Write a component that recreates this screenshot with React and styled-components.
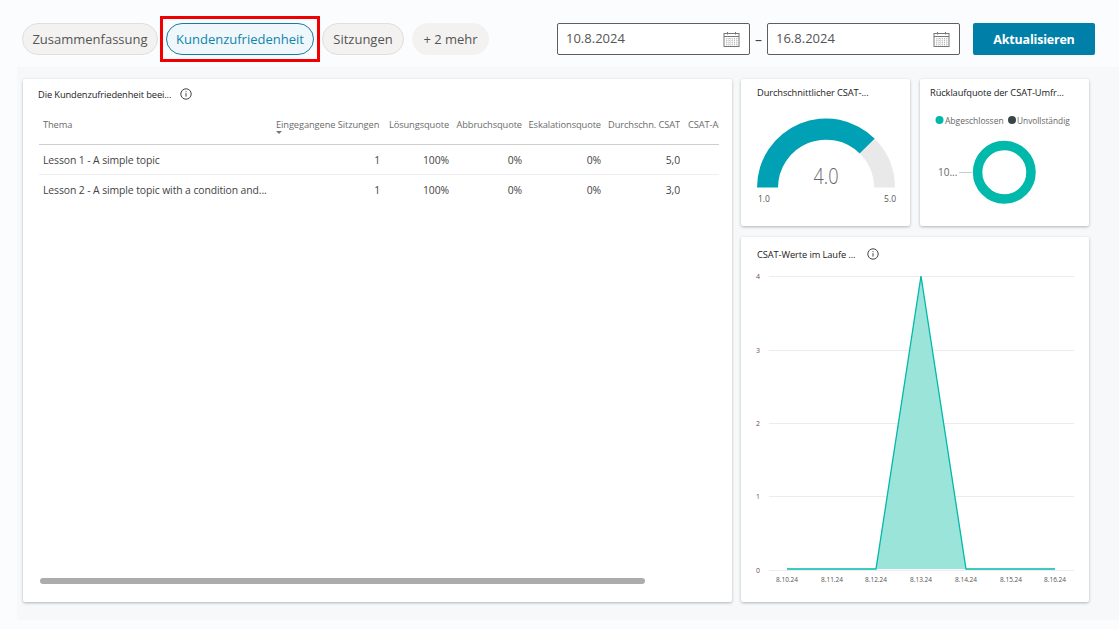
import styled, {createGlobalStyle} from "styled-components";

const GlobalStyle = createGlobalStyle`
	html, body {
		margin: 0;
		padding: 0;
		width: 1119px;
		height: 629px;
		overflow: hidden;
		background: #f8fbfe;
		font-family: "Open Sans", "Liberation Sans", sans-serif;
	}
`

const Page = styled.div`
	width: 1119px;
	height: 629px;
	display: flex;
	flex-direction: column;
	background: #fbfcfe;
`

const TopBar = styled.div`
	height: 67px;
	box-sizing: border-box;
	padding: 23px 24px 0 22px;
	display: flex;
	justify-content: space-between;
	align-items: flex-start;
`

const Pills = styled.div`
	display: flex;
	gap: 8px;
`

const Pill = styled.div`
	position: relative;
	height: 32px;
	box-sizing: border-box;
	width: ${p => p.$width}px;
	padding-bottom: 1px;
	display: flex;
	align-items: center;
	justify-content: center;
	border-radius: 16px;
	font-size: 13px;
	white-space: nowrap;
	color: ${p => p.$active ? "#0f84ad" : "#555"};
	background: ${p => p.$active ? "#eff7fb" : "#f3f2f1"};
	border: 1px solid ${p => p.$active ? "#0f7fa8" : p.$plain ? "#f3f2f1" : "#e1dfdd"};

	${p => p.$active && `
		&::after {
			content: "";
			position: absolute;
			inset: -8px -7px;
			border: 3px solid #f00000;
		}
	`}
`

const DateRow = styled.div`
	display: flex;
	align-items: center;
`

const DateField = styled.div`
	width: 193px;
	height: 32px;
	box-sizing: border-box;
	border: 1px solid #605e5c;
	border-radius: 2px;
	background: #fff;
	padding: 0 9px 2px 8px;
	display: flex;
	align-items: center;
	justify-content: space-between;
	font-size: 13px;
	color: #555;

	svg {
		margin-top: 2px;
	}
`

const Dash = styled.span`
	width: 17px;
	text-align: center;
	font-size: 14px;
	color: #444;
`

const UpdateButton = styled.button`
	width: 122px;
	height: 32px;
	margin-left: 13px;
	border: 0;
	border-radius: 2px;
	background: #0080a9;
	color: #fff;
	font-family: inherit;
	font-size: 12.5px;
	font-weight: 700;
	letter-spacing: -0.2px;
`

const Content = styled.div`
	flex: 1;
	margin: 0 0 9px 17px;
	padding: 12px 30px 18px 6px;
	background: #f7f8f9;
	display: grid;
	grid-template-columns: 709px 169px 170px;
	grid-template-rows: 147px 365px;
	column-gap: 9px;
	row-gap: 11px;
	box-sizing: border-box;
`

const Card = styled.div`
	background: #fff;
	border-radius: 2px;
	box-shadow: 0 1px 3px rgba(0, 0, 0, 0.28);
	box-sizing: border-box;
	position: relative;
	overflow: hidden;
`

const TableCard = styled(Card)`
	grid-row: 1 / span 2;
	padding: 7px 13px 0 15px;
`

const DonutCard = styled(Card)`
	margin-left: 1px;
`

const WideCard = styled(Card)`
	grid-column: 2 / span 2;
`

const CardTitle = styled.div`
	display: flex;
	align-items: center;
	gap: ${p => p.$gap || 0}px;
	height: 16px;
	font-size: 9.3px;
	color: #222;
	white-space: nowrap;
	letter-spacing: -0.1px;
`

const ChartTitle = styled(CardTitle)`
	padding: ${p => p.$top}px 0 0 ${p => p.$left}px;
`

const Table = styled.div`
	margin-top: 8px;
	margin-left: 1px;
	width: 680px;
	overflow: hidden;
`

const TableRow = styled.div`
	display: grid;
	grid-template-columns: 233px 104px 69px 73px 79px 79px 43px;
	height: ${p => p.$head ? 35 : 30}px;
	box-sizing: border-box;
	padding-left: 4px;
	border-bottom: 1px solid ${p => p.$head ? "#cfcfcf" : "#eeeeee"};
	align-items: ${p => p.$head ? "start" : "center"};
	font-size: ${p => p.$head ? 9.3 : 10.4}px;
	color: ${p => p.$head ? "#6b6b6b" : "#444"};
	white-space: nowrap;
	letter-spacing: -0.1px;

	&:last-child {
		border-bottom: 0;
	}
`

const Cell = styled.div`
	text-align: ${p => p.$left ? "left" : "right"};
	overflow: hidden;
	position: relative;
	line-height: 14px;
`

const HeadCell = styled(Cell)`
	padding: 8px 0 0 ${p => p.$indent || 0}px;
	height: 26px;
`

const SortMark = styled.span`
	position: absolute;
	left: 0;
	top: 21px;
	border-left: 3px solid transparent;
	border-right: 3px solid transparent;
	border-top: 3px solid #777;
`

const ScrollBar = styled.div`
	position: absolute;
	left: 17px;
	bottom: 18px;
	width: 605px;
	height: 6px;
	border-radius: 3px;
	background: #acacac;
`

const ChartSvg = styled.svg`
	display: block;
	font-family: "Open Sans", "Liberation Sans", sans-serif;
`

const TrendSvg = styled(ChartSvg)`
	margin-top: 7px;
`

const InfoIcon = () => (
	<svg width="12" height="12" viewBox="0 0 12 12" fill="none" stroke="#444" strokeWidth="1">
		<circle cx="6" cy="6" r="5.2"/>
		<path d="M6 5.2v3.4M6 3.2v1"/>
	</svg>
)

const CalendarIcon = () => (
	<svg width="17" height="17" viewBox="0 0 17 17" fill="none" stroke="#777" strokeWidth="1">
		<rect x="1" y="2.5" width="15" height="13"/>
		<path d="M1 5.5h15M4.5 1v2.5M12.5 1v2.5"/>
		<path d="M3 8h11M3 10h11M3 12h11M3 14h11M4 7v8M6.5 7v8M9 7v8M11.5 7v8M14 7v8" stroke="#aaa" strokeWidth="0.7" strokeDasharray="1 1"/>
	</svg>
)

const rows = [
	{topic: "Lesson 1 - A simple topic", csat: "5,0"},
	{topic: "Lesson 2 - A simple topic with a condition and...", csat: "3,0"},
]

const gridY = [
	{y: 7, label: "4"},
	{y: 81, label: "3"},
	{y: 154, label: "2"},
	{y: 227, label: "1"},
	{y: 301, label: "0"},
]

const days = [
	{x: 46, label: "8.10.24"},
	{x: 91, label: "8.11.24"},
	{x: 135, label: "8.12.24"},
	{x: 180, label: "8.13.24"},
	{x: 225, label: "8.14.24"},
	{x: 270, label: "8.15.24"},
	{x: 314, label: "8.16.24"},
]

const Gauge = () => (
	<ChartSvg width="169" height="110" viewBox="0 0 169 110">
		<path d="M16 87.500A69 69 0 0 1 133.800 38.700L118.800 53.600A48 48 0 0 0 37 87.500Z" fill="#00a0b5"/>
		<path d="M133.800 38.700A69 69 0 0 1 154 87.500H133A48 48 0 0 0 118.800 53.600Z" fill="#e9e9e9"/>
		<text x="85" y="84" textAnchor="middle" fontSize="22" fontWeight="300" textLength="25" lengthAdjust="spacingAndGlyphs" fill="#666">4.0</text>
		<text x="17" y="102" fontSize="8.500" fill="#555">1.0</text>
		<text x="155" y="102" textAnchor="end" fontSize="8.500" fill="#555">5.0</text>
	</ChartSvg>
)

const Donut = () => (
	<ChartSvg width="169" height="110" viewBox="0 0 169 110">
		<circle cx="19.500" cy="20" r="4" fill="#00b9aa"/>
		<text x="25" y="23.500" fontSize="8.500" fill="#666">Abgeschlossen</text>
		<circle cx="92" cy="20" r="4" fill="#374649"/>
		<text x="97" y="23.500" fontSize="8.300" fill="#666">Unvollständig</text>
		<text x="18" y="76" fontSize="10" fill="#666">10...</text>
		<path d="M39 72.500H52" stroke="#ccc" strokeWidth="1"/>
		<circle cx="84.300" cy="72.300" r="26.700" fill="none" stroke="#00b9aa" strokeWidth="9.500"/>
	</ChartSvg>
)

const TrendChart = () => (
	<TrendSvg width="348" height="330" viewBox="0 0 348 330">
		{gridY.map(g => (
			<g key={g.label}>
				<path d={`M28 ${g.y + 0.5}H333`} stroke="#ececec" strokeWidth="1"/>
				<text x="19" y={g.y + 3} textAnchor="end" fontSize="7" fill="#7a4b4b">{g.label}</text>
			</g>
		))}
		<path d="M135 300L180 7L225 300Z" fill="#9ae4da"/>
		<path d="M46 300H135L180 7L225 300H314" fill="none" stroke="#00b9aa" strokeWidth="1.300"/>
		{days.map(d => (
			<text key={d.label} x={d.x} y="313" textAnchor="middle" fontSize="6.500" fill="#555">{d.label}</text>
		))}
	</TrendSvg>
)

const App = () => {
	return (
		<Page>
			<GlobalStyle/>
			<TopBar>
				<Pills>
					<Pill $width={136}>Zusammenfassung</Pill>
					<Pill $width={148} $active>Kundenzufriedenheit</Pill>
					<Pill $width={82}>Sitzungen</Pill>
					<Pill $width={77} $plain>+ 2 mehr</Pill>
				</Pills>
				<DateRow>
					<DateField>10.8.2024<CalendarIcon/></DateField>
					<Dash>–</Dash>
					<DateField>16.8.2024<CalendarIcon/></DateField>
					<UpdateButton>Aktualisieren</UpdateButton>
				</DateRow>
			</TopBar>
			<Content>
				<TableCard>
					<CardTitle $gap={9}>Die Kundenzufriedenheit beei...<InfoIcon/></CardTitle>
					<Table>
						<TableRow $head>
							<HeadCell $left>Thema</HeadCell>
							<HeadCell $left>Eingegangene Sitzungen<SortMark/></HeadCell>
							<HeadCell>Lösungsquote</HeadCell>
							<HeadCell>Abbruchsquote</HeadCell>
							<HeadCell>Eskalationsquote</HeadCell>
							<HeadCell>Durchschn. CSAT</HeadCell>
							<HeadCell $left $indent={8}>CSAT-Antworten</HeadCell>
						</TableRow>
						{rows.map(r => (
							<TableRow key={r.topic}>
								<Cell $left>{r.topic}</Cell>
								<Cell>1</Cell>
								<Cell>100%</Cell>
								<Cell>0%</Cell>
								<Cell>0%</Cell>
								<Cell>{r.csat}</Cell>
								<Cell/>
							</TableRow>
						))}
					</Table>
					<ScrollBar/>
				</TableCard>
				<Card>
					<ChartTitle $top={5} $left={16}>Durchschnittlicher CSAT-...</ChartTitle>
					<Gauge/>
				</Card>
				<DonutCard>
					<ChartTitle $top={5} $left={10}>Rücklaufquote der CSAT-Umfr...</ChartTitle>
					<Donut/>
				</DonutCard>
				<WideCard>
					<ChartTitle $top={9} $left={16} $gap={12}>CSAT-Werte im Laufe ...<InfoIcon/></ChartTitle>
					<TrendChart/>
				</WideCard>
			</Content>
		</Page>
	)
}

export default App
